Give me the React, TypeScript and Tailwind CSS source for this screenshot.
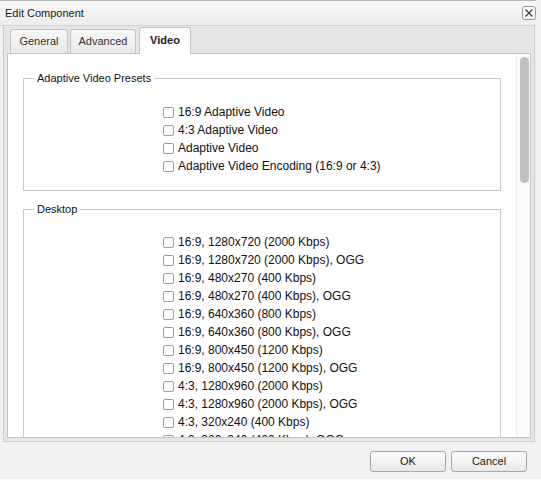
import React from "react";

const presets = [
  "16:9 Adaptive Video",
  "4:3 Adaptive Video",
  "Adaptive Video",
  "Adaptive Video Encoding (16:9 or 4:3)",
];

const desktop = [
  "16:9, 1280x720 (2000 Kbps)",
  "16:9, 1280x720 (2000 Kbps), OGG",
  "16:9, 480x270 (400 Kbps)",
  "16:9, 480x270 (400 Kbps), OGG",
  "16:9, 640x360 (800 Kbps)",
  "16:9, 640x360 (800 Kbps), OGG",
  "16:9, 800x450 (1200 Kbps)",
  "16:9, 800x450 (1200 Kbps), OGG",
  "4:3, 1280x960 (2000 Kbps)",
  "4:3, 1280x960 (2000 Kbps), OGG",
  "4:3, 320x240 (400 Kbps)",
  "4:3, 320x240 (400 Kbps), OGG",
];

function Row({ label }: { label: string }) {
  return (
    <label className="flex items-center h-[18px] gap-[4px] text-[12px] leading-[18px] text-[#111] whitespace-nowrap">
      <span className="w-[11px] h-[11px] shrink-0 rounded-[2px] border border-[#9c9c9c] bg-white" />
      <span>{label}</span>
    </label>
  );
}

function Group({
  title,
  items,
  className,
}: {
  title: string;
  items: string[];
  className: string;
}) {
  return (
    <fieldset className={`w-[478px] border border-[#cacaca] px-[10px] shrink-0 ${className}`}>
      <legend className="px-[3px] text-[11px] leading-[13px] text-[#111]">{title}</legend>
      <div className="flex flex-col pl-[129px]">
        {items.map((t) => (
          <Row key={t} label={t} />
        ))}
      </div>
    </fieldset>
  );
}

export default function App() {
  return (
    <div className="w-[541px] h-[480px] bg-[#f1f1f1] flex flex-col overflow-hidden font-['Liberation_Sans',Arial,sans-serif] text-[#222] border-b border-[#fbfbfb]">
      {/* Title bar */}
      <div className="h-[26px] w-[536px] shrink-0 flex items-center justify-between pl-[5px] border-t border-t-[#b8b8b8] border-b border-b-[#d3d3d3] bg-linear-to-b from-[#f8f8f8] to-[#ececec]">
        <span className="text-[11px] leading-[13px] text-[#222]">Edit Component</span>
        <button className="w-[14px] h-[14px] rounded-[3px] border border-[#9a9a9a] bg-[#fafafa] flex items-center justify-center">
          <svg width="8" height="8" viewBox="0 0 8 8">
            <path d="M0.5 0.5 L7.5 7.5 M7.5 0.5 L0.5 7.5" stroke="#333" strokeWidth="1.1" />
          </svg>
        </button>
      </div>

      {/* Tab container */}
      <div className="ml-[3px] w-[532px] h-[416px] shrink-0 border-x border-b border-[#cdcdcd] bg-[#e6e6e6] px-[3px] pb-[3px] flex flex-col">
        <div className="h-[27px] shrink-0 flex items-end pl-[3px] gap-[2px] text-[11px]">
          <div className="w-[58px] h-[24px] rounded-t-[3px] border-x border-t border-[#c3c3c3] bg-linear-to-b from-[#f7f7f7] to-[#e9e9e9] flex items-center justify-center text-[#333]">
            General
          </div>
          <div className="w-[66px] h-[24px] rounded-t-[3px] border-x border-t border-[#c3c3c3] bg-linear-to-b from-[#f7f7f7] to-[#e9e9e9] flex items-center justify-center text-[#333]">
            Advanced
          </div>
          <div className="relative z-10 ml-[1px] -mb-[1px] w-[52px] h-[27px] rounded-t-[3px] border-x border-t border-[#c3c3c3] bg-linear-to-b from-[#f9f9f9] to-white flex items-center justify-center font-bold text-[#222] pb-[1px]">
            Video
          </div>
        </div>

        <div className="flex-1 min-h-0 border border-[#c5c5c5] bg-white flex overflow-hidden">
          <div className="flex-1 min-w-0 overflow-hidden pl-[15px] flex flex-col">
            <Group title="Adaptive Video Presets" items={presets} className="mt-[18px] pt-[18px] pb-[15px]" />
            <Group title="Desktop" items={desktop} className="mt-[12px] pt-[17px] pb-[16px]" />
          </div>
          <div className="w-[14px] shrink-0 border-l border-[#ececec] bg-[#fbfbfb] pt-[3px] pl-[3px]">
            <div className="w-[9px] h-[126px] rounded-full bg-[#c0c0c0]" />
          </div>
        </div>
      </div>

      {/* Buttons */}
      <div className="flex-1 flex justify-end items-start pt-[9px] pr-[14px] gap-[5px]">
        <button className="w-[76px] h-[21px] rounded-[3px] border border-[#a9a9a9] bg-linear-to-b from-[#fdfdfd] to-[#e8e8e8] text-[11px] text-[#222]">
          OK
        </button>
        <button className="w-[76px] h-[21px] rounded-[3px] border border-[#a9a9a9] bg-linear-to-b from-[#fdfdfd] to-[#e8e8e8] text-[11px] text-[#222]">
          Cancel
        </button>
      </div>
    </div>
  );
}
